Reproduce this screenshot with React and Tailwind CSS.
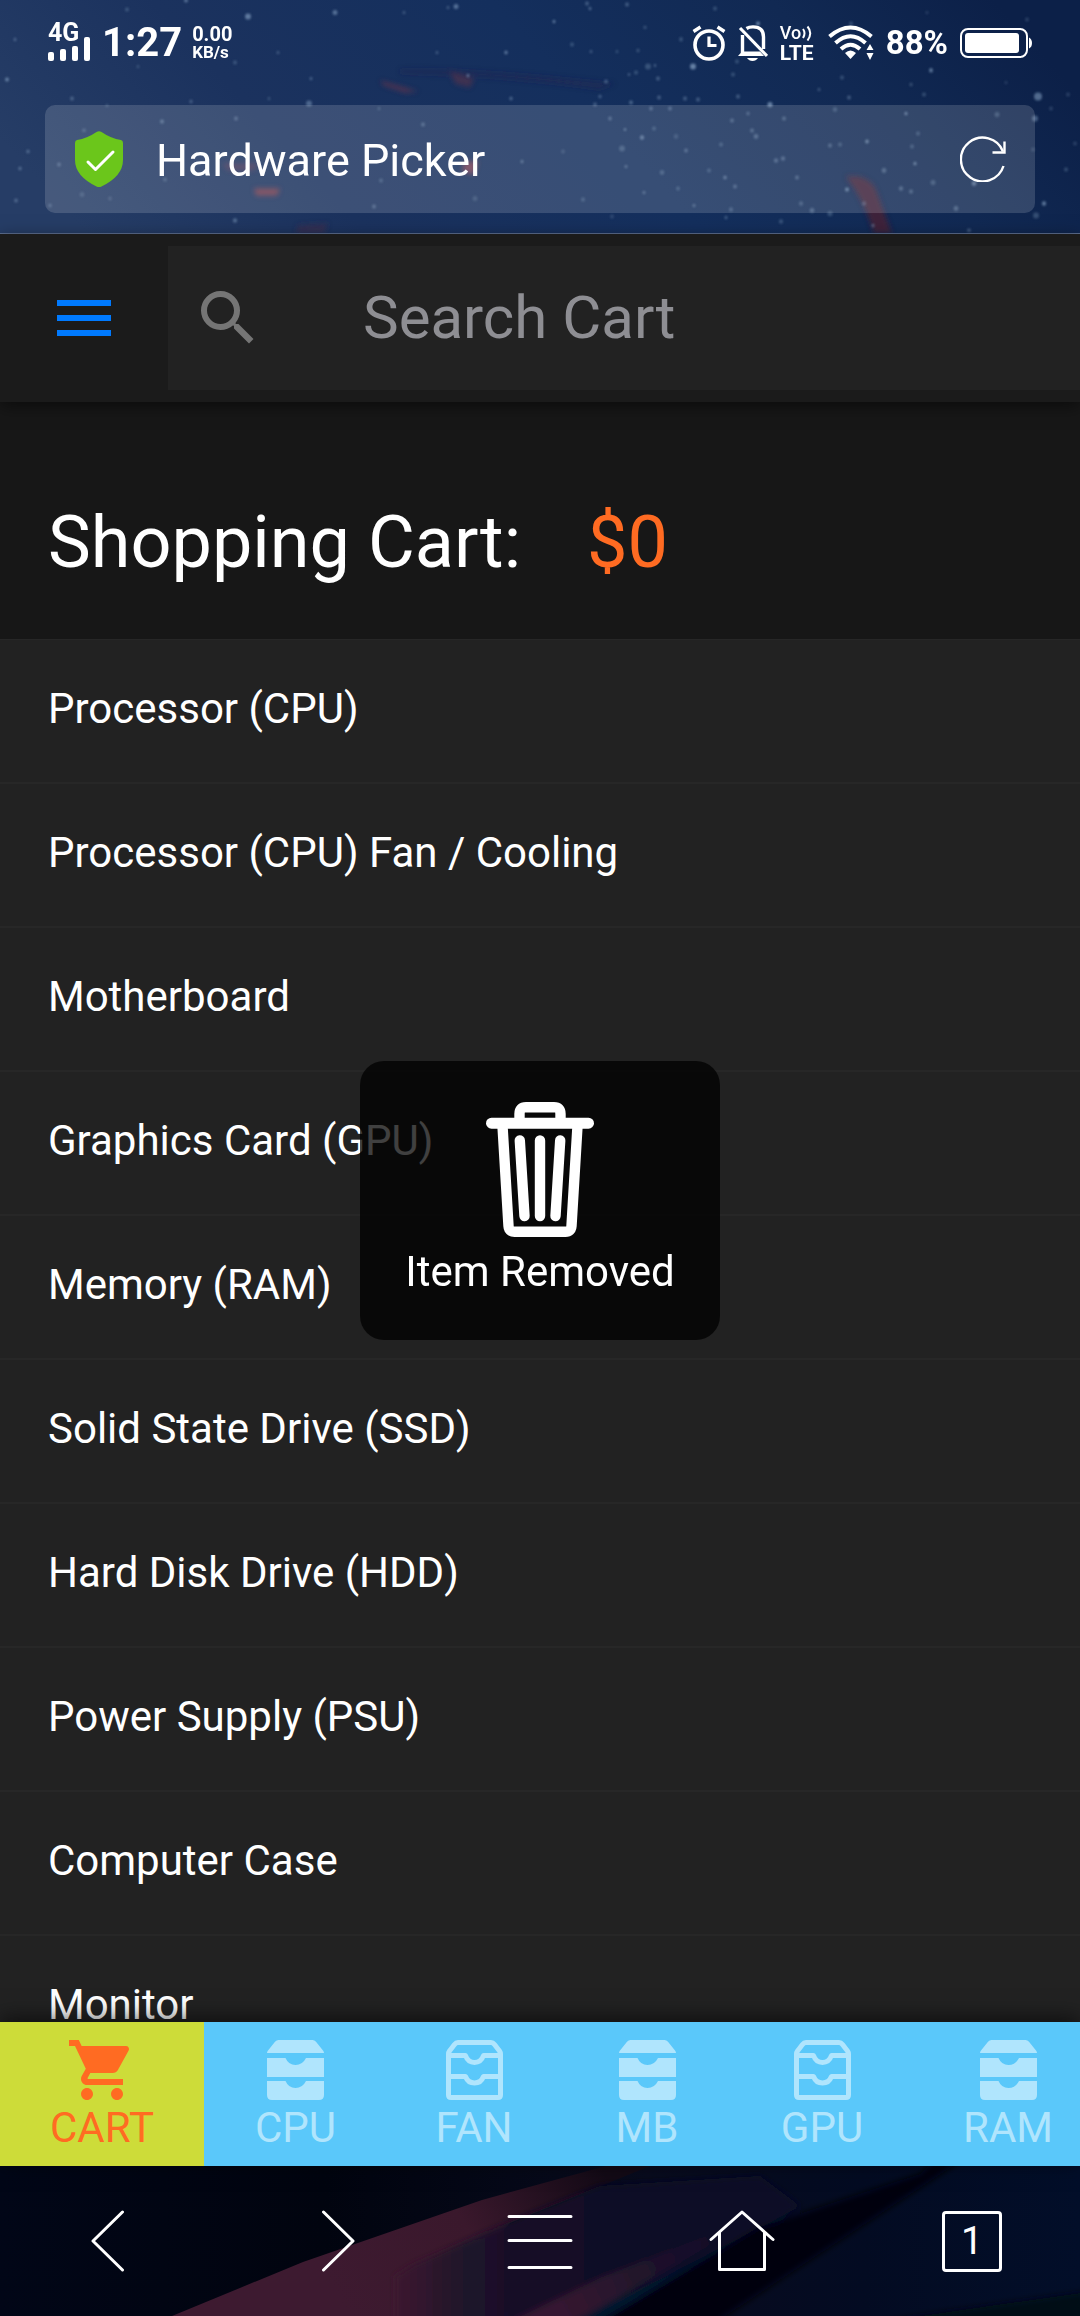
import React from "react";
import { MdMenu, MdSearch, MdShoppingCart } from "react-icons/md";

const STARS = [
  [186, 1, 2, 0.7], [127, 10, 2, 0.4], [248, 17, 3, 0.8], [335, 13, 2.5, 0.7], [404, 13, 1.5, 0.5],
  [448, 8, 1.5, 0.5], [456, 7, 2.5, 0.7], [15, 40, 1.5, 0.6], [278, 53, 1.5, 0.5], [437, 53, 1.5, 0.5],
  [506, 53, 1.8, 0.8], [138, 67, 1.5, 0.4], [235, 63, 2, 0.4], [7, 80, 2, 0.8], [311, 79, 1.5, 0.6],
  [468, 76, 1.5, 0.8], [72, 99, 2, 0.5], [191, 102, 1.8, 0.5], [269, 99, 1.5, 0.4], [309, 104, 3, 0.6],
  [511, 99, 1.8, 0.6], [107, 106, 1.5, 0.4], [379, 109, 1.5, 0.4], [162, 122, 2, 0.6], [236, 119, 2, 0.5],
  [423, 125, 2, 0.5], [84, 131, 2, 0.4], [28, 152, 1.8, 0.6], [20, 169, 1.8, 0.6], [59, 165, 2, 0.5],
  [522, 162, 1.5, 0.7], [165, 180, 2, 0.4], [381, 181, 2, 0.4], [82, 195, 2.5, 0.3], [110, 199, 2, 0.3],
  [16, 201, 2, 0.5], [50, 206, 1.8, 0.5], [475, 199, 2.5, 0.3], [235, 221, 2.2, 0.6], [374, 207, 2, 0.5],
  [587, 4, 2, 0.5], [590, 9, 1.5, 0.7], [627, 5, 2, 0.5], [554, 22, 1.5, 0.9], [645, 28, 1.8, 0.4],
  [715, 9, 2, 0.4], [572, 45, 2, 0.4], [591, 52, 1.5, 0.5], [617, 52, 1.5, 0.4], [638, 51, 1.8, 0.4],
  [681, 40, 2, 0.4], [648, 67, 3, 0.4], [655, 66, 1.2, 0.7], [636, 73, 2, 0.4], [629, 75, 1.3, 0.6],
  [693, 67, 3, 0.9], [606, 82, 2, 0.5], [658, 79, 2, 0.5], [733, 75, 2, 0.4], [758, 24, 2, 0.9],
  [737, 62, 2, 0.4], [851, 24, 2, 0.4], [927, 13, 1.6, 0.3], [931, 71, 2, 0.8], [842, 78, 2, 0.4],
  [819, 90, 1.5, 0.5], [911, 85, 1.8, 0.4], [924, 95, 2, 0.4], [1038, 97, 4, 0.7], [1035, 119, 3, 0.6],
  [1027, 20, 2, 0.3], [1006, 83, 1.6, 0.3], [1051, 109, 2, 0.3], [1068, 95, 2, 0.3], [600, 97, 1.8, 0.5],
  [659, 98, 2, 0.5], [685, 99, 2, 0.5], [698, 100, 2, 0.5], [738, 97, 2, 0.5], [849, 98, 2, 0.5],
  [595, 105, 2, 0.5], [631, 103, 2, 0.6], [651, 109, 2, 0.5], [670, 109, 2, 0.5], [770, 105, 2.6, 0.9],
  [835, 110, 2.2, 0.4], [610, 119, 2, 0.5], [732, 121, 2, 0.5], [748, 114, 1.8, 0.5], [784, 119, 2, 0.5],
  [906, 114, 1.6, 0.9], [997, 115, 2.5, 0.4], [625, 130, 1.3, 0.8], [642, 138, 2.2, 0.7], [654, 129, 2, 0.4],
  [752, 131, 2, 0.5], [756, 137, 2.4, 0.5], [676, 137, 2.4, 0.3], [721, 145, 2, 0.4], [867, 142, 1.8, 0.9],
  [918, 134, 2, 0.4], [912, 147, 2, 0.4], [563, 152, 2, 0.3], [622, 149, 3, 0.4], [686, 151, 2, 0.5],
  [830, 146, 2, 0.5], [840, 145, 2, 0.4], [776, 161, 2.2, 0.5], [783, 159, 2.2, 0.5], [626, 167, 1.6, 0.6],
  [662, 173, 2.4, 0.4], [709, 171, 2, 0.4], [725, 178, 1.8, 0.7], [735, 187, 2, 0.5], [797, 178, 2, 0.5],
  [884, 171, 2.4, 0.5], [915, 164, 1.6, 0.9], [933, 183, 2.5, 0.4], [974, 184, 2.4, 0.7], [644, 193, 1.6, 0.6],
  [678, 189, 2, 0.4], [847, 190, 2, 0.8], [901, 189, 2.2, 0.5], [911, 192, 2, 0.5], [583, 200, 2, 0.4],
  [694, 206, 1.6, 0.6], [731, 210, 2.2, 0.4], [801, 204, 2.2, 0.4], [812, 211, 2.4, 0.5], [864, 204, 2.2, 0.4],
  [956, 209, 2.4, 0.5], [1044, 204, 2.2, 0.8], [612, 217, 2, 0.3], [726, 218, 1.5, 0.6], [781, 222, 2.2, 0.4],
  [830, 214, 2.6, 0.4], [873, 226, 1.6, 0.7], [1036, 216, 3, 0.4], [969, 231, 2, 0.5], [1066, 170, 2, 0.4],
  [1075, 144, 2, 0.3], [1033, 150, 2, 0.3],
];

const CATEGORIES = [
  "Processor (CPU)",
  "Processor (CPU) Fan / Cooling",
  "Motherboard",
  "Graphics Card (GPU)",
  "Memory (RAM)",
  "Solid State Drive (SSD)",
  "Hard Disk Drive (HDD)",
  "Power Supply (PSU)",
  "Computer Case",
  "Monitor",
];

const TABS = [
  { label: "CART", icon: "cart", width: "w-[204px]" },
  { label: "CPU", icon: "filled", width: "w-[183px]" },
  { label: "FAN", icon: "outline", width: "w-[174px]" },
  { label: "MB", icon: "filled", width: "w-[172px]" },
  { label: "GPU", icon: "outline", width: "w-[178px]" },
  { label: "RAM", icon: "filled", width: "w-[194px]" },
];

function NightSky() {
  return (
    <svg
      className="absolute inset-0 h-full w-full"
      viewBox="0 0 1080 234"
      preserveAspectRatio="xMidYMid slice"
      aria-hidden="true"
    >
      <defs>
        <linearGradient id="sky" x1="0" y1="0.6" x2="1" y2="0.4">
          <stop offset="0" stopColor="#263d66" />
          <stop offset="0.25" stopColor="#1b325e" />
          <stop offset="0.55" stopColor="#142f5d" />
          <stop offset="0.8" stopColor="#112953" />
          <stop offset="1" stopColor="#0c2048" />
        </linearGradient>
        <filter id="soft" x="-20%" y="-20%" width="140%" height="140%">
          <feGaussianBlur stdDeviation="2.5" />
        </filter>
        <filter id="glow">
          <feGaussianBlur stdDeviation="0.8" />
        </filter>
      </defs>
      <rect width="1080" height="234" fill="url(#sky)" />
      <g filter="url(#soft)">
        <path d="M400 70 Q470 68 615 84 L600 90 Q500 76 400 74Z" fill="#2a2650" opacity="0.4" />
        <path d="M380 81 L418 92 L405 93 L384 86Z" fill="#6b3448" opacity="0.7" />
        <path d="M450 72 L474 79 L470 88 L455 84Z" fill="#5c3048" opacity="0.6" />
        <path d="M254 189 H280 L277 196 H256Z" fill="#8f3f48" opacity="0.75" />
        <path d="M222 164 H258 L254 171 H228Z" fill="#6a3a54" opacity="0.5" />
        <path d="M464 162 L478 162 L474 175 L462 172Z" fill="#96404e" opacity="0.7" />
        <path d="M298 226 L328 224 L324 234 H296Z" fill="#3a2c4f" opacity="0.7" />
        <path d="M846 177 Q866 174 875 188 L892 234 H874 Q864 200 846 177Z" fill="#4a2236" opacity="0.8" />
      </g>
      <g fill="#8fabcb" filter="url(#glow)">
        {STARS.map(([x, y, r, o]) => (
          <circle key={`${x}-${y}`} cx={x} cy={y} r={r} opacity={o * 0.75} />
        ))}
      </g>
    </svg>
  );
}

function DuskRidge() {
  return (
    <svg
      className="absolute inset-0 h-full w-full"
      viewBox="0 0 1080 150"
      preserveAspectRatio="none"
      aria-hidden="true"
    >
      <defs>
        <linearGradient id="dusk" x1="0" y1="0" x2="1" y2="0">
          <stop offset="0" stopColor="#010617" />
          <stop offset="0.3" stopColor="#01040f" />
          <stop offset="0.6" stopColor="#080b1e" />
          <stop offset="0.8" stopColor="#030b22" />
          <stop offset="1" stopColor="#020e29" />
        </linearGradient>
        <linearGradient id="plum" x1="350" y1="150" x2="600" y2="0" gradientUnits="userSpaceOnUse">
          <stop offset="0" stopColor="#3d1a30" />
          <stop offset="0.5" stopColor="#3a182c" />
          <stop offset="1" stopColor="#130a16" />
        </linearGradient>
        <linearGradient id="indigo" x1="395" y1="0" x2="640" y2="0" gradientUnits="userSpaceOnUse">
          <stop offset="0" stopColor="#3d1a30" />
          <stop offset="0.3" stopColor="#1d1229" />
          <stop offset="1" stopColor="#0c0e27" />
        </linearGradient>
        <linearGradient id="streak" x1="560" y1="150" x2="730" y2="60" gradientUnits="userSpaceOnUse">
          <stop offset="0" stopColor="#351630" />
          <stop offset="1" stopColor="#351630" stopOpacity="0" />
        </linearGradient>
        <filter id="haze" x="-10%" y="-10%" width="120%" height="120%">
          <feGaussianBlur stdDeviation="3" />
        </filter>
      </defs>
      <rect width="1080" height="150" fill="url(#dusk)" />
      <path d="M172 150L303 96L482 34L606 0H650L510 57L420 150Z" fill="url(#plum)" />
      <g filter="url(#haze)">
        <path d="M396 160V110L413 99L510 56L600 20L760 10L800 40L740 74L590 160Z" fill="url(#indigo)" />
        <path d="M510 156L600 112L740 56L716 76L574 156Z" fill="url(#streak)" />
        <path d="M574 156L750 67L790 46L757 74L610 156Z" fill="#03122e" />
        <path d="M600 156L757 62L920 8L935 -6H962L716 156Z" fill="#01020d" />
        <path d="M880 156Q1000 138 1086 126V156Z" fill="#020817" />
      </g>
    </svg>
  );
}

function SignalIcon() {
  return (
    <svg className="absolute bottom-0 left-0 h-6 w-[42px]" viewBox="0 0 42 24" fill="#fff" aria-hidden="true">
      <rect x="0" y="15" width="6" height="9" rx="2" />
      <rect x="12" y="12" width="6" height="12" rx="2" />
      <rect x="24" y="9" width="6" height="15" rx="2" />
      <rect x="36" y="0" width="6" height="24" rx="2" />
    </svg>
  );
}

function AlarmIcon() {
  return (
    <svg className="h-9 w-[34px]" viewBox="0 0 34 36" fill="none" stroke="#fff" aria-hidden="true">
      <circle cx="17" cy="20" r="14" strokeWidth="3.6" />
      <path d="M17 11.5V20.5H24.5" strokeWidth="3.2" />
      <path d="M1.5 6.5L8.5 2M32.5 6.5L25.5 2" strokeWidth="3.4" />
    </svg>
  );
}

function BellOffIcon() {
  return (
    <svg className="h-9 w-[30px]" viewBox="0 0 30 36" fill="none" stroke="#fff" aria-hidden="true">
      <path d="M4.5 28V10" strokeWidth="3.4" />
      <path d="M8.5 3.5Q11 1.9 15 1.9Q25.5 1.9 25.5 12V24" strokeWidth="3.4" />
      <path d="M0 31L4 26.5H22L26 31Z" fill="#fff" stroke="none" />
      <path d="M9 33H20Q18 36 14.5 36Q11 36 9 33Z" fill="#fff" stroke="none" />
      <path d="M2 3L29 31" strokeWidth="3.2" />
    </svg>
  );
}

function WifiIcon() {
  return (
    <svg className="h-9 w-[46px]" viewBox="0 0 46 36" fill="none" stroke="#fff" aria-hidden="true">
      <path d="M1.5 11.5Q22.5 -6.5 43.5 11.5" strokeWidth="4" />
      <path d="M7.5 18Q22.5 4.5 37.5 18" strokeWidth="4" />
      <path d="M13 24Q22.5 15.5 32 24" strokeWidth="4" />
      <path d="M17 28Q22.5 23 28 28L22.5 34Z" fill="#fff" stroke="none" />
      <path d="M42 19L45.5 25H38.5ZM42 35L45.5 28H38.5Z" fill="#fff" stroke="none" />
    </svg>
  );
}

function BatteryIcon() {
  return (
    <svg className="h-[30px] w-[72px]" viewBox="0 0 72 30" fill="none" role="img" aria-label="Battery">
      <rect x="1" y="1" width="66" height="28" rx="7" stroke="#fff" strokeWidth="2" />
      <rect x="5" y="5" width="54" height="20" rx="3" fill="#fff" />
      <path d="M69 9.5Q72 11 72 15Q72 19 69 20.5Z" fill="#fff" />
    </svg>
  );
}

function StatusBar() {
  return (
    <div className="relative flex h-21 items-center justify-between px-12 pt-0.5 font-bold text-white">
      <div className="flex items-center">
        <div className="relative h-9 w-[42px]">
          <span className="block text-[25px] leading-4">4G</span>
          <SignalIcon />
        </div>
        <span className="ml-3 text-[40px] leading-10">1:27</span>
        <span className="ml-[10px] flex flex-col">
          <span className="text-[20px] leading-[18px]">0.00</span>
          <span className="text-[17px] leading-[18px]">KB/s</span>
        </span>
      </div>
      <div className="flex items-center gap-3">
        <AlarmIcon />
        <BellOffIcon />
        <span className="flex w-9 flex-col">
          <span className="flex items-center text-[18px] leading-5 font-medium">
            Vo
            <svg className="h-4 w-3" viewBox="0 0 12 16" fill="none" stroke="#fff" strokeWidth="2" aria-hidden="true">
              <path d="M2 4Q5 8 2 13M6.5 1.5Q12 8 6.5 15.5" />
            </svg>
          </span>
          <span className="text-[21px] leading-5">LTE</span>
        </span>
        <WifiIcon />
        <span className="text-[33px] leading-10">88%</span>
        <BatteryIcon />
      </div>
    </div>
  );
}

function AddressBar() {
  return (
    <div className="relative mx-[45px] mt-[21px] mb-5 flex h-27 items-center rounded-[10px] bg-white/15 pr-[29px] pl-[30px]">
      <svg className="h-14 w-12" viewBox="0 0 48 56" role="img" aria-label="Secure site">
        <path
          d="M21.5 1Q24 -0.5 26.5 1Q36 7.5 46 9Q48 9.5 48 12V29Q48 45 26.5 55.5Q24 56.5 21.5 55.5Q0 45 0 29V12Q0 9.5 2 9Q12 7.5 21.5 1Z"
          fill="#6bc61b"
        />
        <path d="M13 31L20.5 38.5L38 21" fill="none" stroke="#fff" strokeWidth="3" strokeLinecap="round" strokeLinejoin="round" />
      </svg>
      <span className="ml-[33px] flex-1 pt-1 text-[45px] leading-[54px] text-white">Hardware Picker</span>
      <button type="button" aria-label="Reload">
        <svg className="block h-[46px] w-[46px]" viewBox="0 0 46 46" fill="none" stroke="#fff" strokeWidth="2.4" aria-hidden="true">
          <path d="M43.5 30A21.8 21.8 0 1 1 43 15.5" />
          <path d="M32.5 16.5H44.5V5.5" />
        </svg>
      </button>
    </div>
  );
}

function DrawerIcon({ outline }) {
  if (outline) {
    return (
      <svg className="h-[60px] w-[57px]" viewBox="0 0 57 60" fill="none" stroke="currentColor" strokeWidth="5" strokeLinejoin="round" aria-hidden="true">
        <path d="M2.5 14Q2.5 12.5 3.5 11L8.5 4.5Q10 2.5 12 2.5H45Q47 2.5 48.5 4.5L53.5 11Q54.5 12.5 54.5 14V55Q54.5 57.5 52 57.5H5Q2.5 57.5 2.5 55Z" />
        <path d="M2.5 15.5H19.5Q22 22.5 28.5 22.5T37.5 15.5H54.5M2.5 36.5H19.5Q22 43 28.5 43T37.5 36.5H54.5" />
      </svg>
    );
  }
  return (
    <svg className="h-[60px] w-[57px]" viewBox="0 0 57 60" fill="currentColor" aria-hidden="true">
      <path d="M0 13Q0 11.5 1 10.5L8 1.8Q9.5 0 11.5 0H45.5Q47.5 0 49 1.8L56 10.5Q57 11.5 57 13Z" />
      <path d="M0 18H18.5Q21.5 25 28.5 25T39 18H57V37H0Z" />
      <path d="M0 41H18.5Q21.5 48 28.5 48T39 41H57V55Q57 60 52 60H5Q0 60 0 55Z" />
    </svg>
  );
}

function TrashIcon() {
  return (
    <svg className="h-[135px] w-[108px]" viewBox="0 0 108 135" fill="none" stroke="#fff" strokeWidth="10.4" strokeLinecap="round" aria-hidden="true">
      <path d="M33.5 18V12Q33.5 5.2 40 5.2H68Q74.5 5.2 74.5 12V18" />
      <path d="M5.5 21.2H102.5" strokeWidth="11" />
      <path d="M16.5 24L22.5 124Q22.8 129.7 28.5 129.7H79.5Q85.2 129.7 85.5 124L91.5 24" />
      <path d="M33.8 38.5L38.5 114M54 38.5V114M74.2 38.5L69.5 114" />
    </svg>
  );
}

function Toast() {
  return (
    <div className="pointer-events-none absolute inset-0 z-20 flex items-center justify-center">
      <div role="status" className="flex flex-col items-center rounded-3xl bg-black/75 px-[45px] pt-[41px] pb-[42px]">
        <TrashIcon />
        <p className="mt-[9px] text-[42px] leading-[52px] text-white">Item Removed</p>
      </div>
    </div>
  );
}

function TabBar() {
  return (
    <nav className="relative z-10 flex overflow-hidden bg-[#5ac8fa] shadow-[0_-4px_20px_rgba(0,0,0,0.6)]">
      {TABS.map(({ label, icon, width }) => {
        const active = icon === "cart";
        return (
          <button
            key={label}
            type="button"
            aria-current={active ? "page" : undefined}
            className={`flex h-36 shrink-0 flex-col items-center pt-3 ${width} ${
              active ? "bg-[#cddc39] text-[#ff6b22]" : "text-[#b0e5fd]"
            }`}
          >
            <span className="flex h-18 items-center justify-center">
              {active ? <MdShoppingCart className="h-18 w-18" /> : <DrawerIcon outline={icon === "outline"} />}
            </span>
            <span className="text-[42px] leading-11">{label}</span>
          </button>
        );
      })}
    </nav>
  );
}

function BrowserBar() {
  const button = "flex items-center justify-center";
  const line = {
    fill: "none",
    stroke: "#fff",
    strokeWidth: 3,
    strokeLinecap: "round",
    strokeLinejoin: "round",
    "aria-hidden": true,
  };
  return (
    <footer className="relative h-[150px] shrink-0 overflow-hidden bg-[#01040f]">
      <DuskRidge />
      <div className="relative grid h-full grid-cols-[54fr_61fr_40fr_61fr_54fr]">
        <button type="button" aria-label="Back" className={button}>
          <svg className="h-[62px] w-[34px]" viewBox="0 0 34 62" {...line}>
            <path d="M31.5 2L2 31L31.5 60" />
          </svg>
        </button>
        <button type="button" aria-label="Forward" className={button}>
          <svg className="h-[62px] w-[34px]" viewBox="0 0 34 62" {...line}>
            <path d="M2.5 2L32 31L2.5 60" />
          </svg>
        </button>
        <button type="button" aria-label="Menu" className={button}>
          <svg className="h-[62px] w-[66px]" viewBox="0 0 66 62" {...line}>
            <path d="M2 6.5H64M2 30.5H64M2 57.5H64" />
          </svg>
        </button>
        <button type="button" aria-label="Home" className={button}>
          <svg className="h-[62px] w-[66px]" viewBox="0 0 66 62" {...line}>
            <path d="M2 29.5L33 2L64 29.5M10.5 22.5V59.5H55.5V22.5" />
          </svg>
        </button>
        <button type="button" aria-label="Open tabs: 1" className={button}>
          <span className="flex h-[61px] w-[60px] items-center justify-center rounded-[4px] border-3 border-white text-[39px] leading-10 text-white">
            1
          </span>
        </button>
      </div>
    </footer>
  );
}

export default function App() {
  return (
    <div className="flex h-screen flex-col overflow-hidden bg-[#171717] font-['Roboto',sans-serif]">
      <header className="relative shrink-0 overflow-hidden border-b border-[#5d6f91] bg-[#142f5d]">
        <NightSky />
        <StatusBar />
        <AddressBar />
      </header>

      <div className="relative flex min-h-0 flex-1 flex-col">
        <div className="relative z-10 flex h-42 shrink-0 items-center bg-[#1b1b1b] shadow-[0_4px_16px_rgba(0,0,0,0.5)]">
          <button type="button" aria-label="Menu" className="flex w-42 items-center justify-center text-[#007aff]">
            <MdMenu className="h-18 w-18" />
          </button>
          <label className="flex h-36 min-w-0 flex-1 items-center bg-[#222222] pl-6">
            <MdSearch className="h-18 w-18 shrink-0 text-[#757575]" />
            <input
              type="search"
              aria-label="Search Cart"
              placeholder="Search Cart"
              className="ml-[99px] min-w-0 flex-1 bg-transparent text-[60px] leading-[72px] text-white outline-none placeholder:text-[#8e8e93]"
            />
          </label>
        </div>

        <main className="min-h-0 flex-1 overflow-hidden">
          <h1 className="flex px-12 pt-[105px] pb-15 text-[72px] leading-[72px] text-white">
            Shopping Cart:
            <span className="ml-[66px] text-[#ff6b22]">$0</span>
          </h1>
          <ul className="border-t border-[#272727] bg-[#222222]">
            {CATEGORIES.map((name) => (
              <li
                key={name}
                className="flex h-36 items-center border-b-2 border-[#272727] px-12 pb-1 text-[42px] leading-[54px] text-white"
              >
                {name}
              </li>
            ))}
          </ul>
        </main>

        <TabBar />
        <Toast />
      </div>

      <BrowserBar />
    </div>
  );
}
